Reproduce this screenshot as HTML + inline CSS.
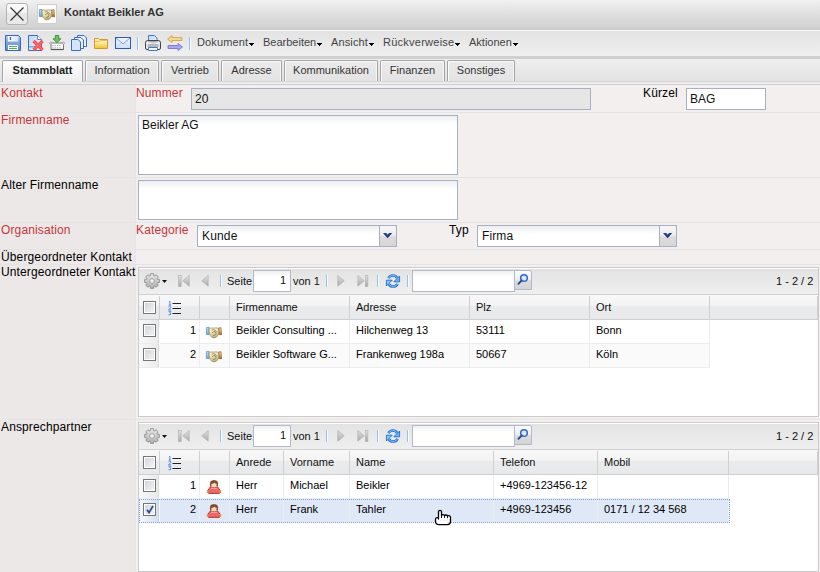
<!DOCTYPE html><html><head><meta charset="utf-8"><style>
*{box-sizing:border-box;margin:0;padding:0}
html,body{width:820px;height:572px;overflow:hidden;background:#f2efee;font-family:"Liberation Sans",sans-serif;font-size:12px;color:#111}
div{position:absolute}
svg{position:absolute;overflow:visible}
#title{left:0;top:0;width:820px;height:30px;background:linear-gradient(#f1f1f1 0px,#d8d8d8 20px,#d4d4d4 27px,#cdcdcd 28px,#cacaca 30px)}
#closebtn{left:6px;top:3px;width:22px;height:22px;border:1px solid #b4b4b4;border-radius:3px;background:linear-gradient(#fbfbfb 0,#f3f3f3 45%,#e6e6e6 46%,#e9e9e9 100%)}
#ticon{left:37px;top:4px;width:20px;height:20px;border:1px solid #cfcfcf;background:#fff}
#ttext{left:64px;top:6px;font-size:11px;font-weight:bold;color:#333;white-space:nowrap}
#tb{left:0;top:30px;width:820px;height:26px;border-top:1px solid #fbfbfb;background:linear-gradient(#e3e3e3,#efefef)}
#tbline{left:0;top:56px;width:820px;height:3px;background:#d0d0d0}
#tabs{left:0;top:59px;width:820px;height:26px;background:linear-gradient(#efefef,#e2e2e2 22px,#d4d4d4 22px,#d4d4d4 23px,#ececec 23px,#ececec 25px,#d0d0d0 25px)}
.tab{top:60px;height:21px;border:1px solid #a4a4a4;border-bottom:none;border-radius:2px 2px 0 0;box-shadow:inset 1px 1px 0 #fbfbfb,inset -1px 0 0 #f6f6f6;background:linear-gradient(#ebebeb,#e3e3e3);font-size:11px;color:#333;text-align:center;line-height:19px;white-space:nowrap}
.tab.sel{height:22px;background:linear-gradient(#ffffff,#ececec);font-weight:bold;color:#222}
#tabline{display:none}
#tabline2{display:none}
#lcol{left:0;top:85px;width:135px;height:487px;background:#ece8e7}
.rowsep{left:0;width:820px;height:1px;background:#e5e4e4}
.lbl{font-size:12px;color:#000;white-space:nowrap;letter-spacing:0.13px}
.red{color:#c8353a}
.inp{border:1px solid #a9afc2;background:#fff;font-size:12px;padding-left:3px;white-space:nowrap}
.ta{background:linear-gradient(#eceeef,#fff 8px)}
.menu{top:36px;font-size:11px;color:#444;white-space:nowrap;position:absolute}
.menu svg{position:relative;display:inline-block;margin-left:1px;vertical-align:baseline;top:0px}
.sep{width:1px;background:#8fc3f5;box-shadow:1px 0 0 #fafafa}
.g{border:1px solid #cbcbcb;background:#fff}
.gtb{height:27px;background:linear-gradient(#e3e3e3,#efefef);border-top:1px solid #fff;border-bottom:1px solid #d0d0d0}
.gh{height:25px;background:linear-gradient(#f8f8f8 0,#f3f3f3 45%,#eaebed 46%,#e8e9eb 100%);border-bottom:1px solid #d0d0d0}
.hc{top:1px;height:23px;border-right:1px solid #d0d0d0;font-size:11px;color:#111;line-height:23px;padding-left:6px;white-space:nowrap}
.cell{height:24px;border-right:1px solid #ededed;border-bottom:1px solid #ededed;font-size:11px;color:#000;line-height:21px;padding-left:6px;white-space:nowrap;overflow:hidden}
.num{text-align:right;padding-right:3px;padding-left:0}
.cbc{background:linear-gradient(90deg,#f9f9f9,#eaeaea);border-right-color:#dadada}
.cb{width:13px;height:13px;border:1px solid #767676;background:linear-gradient(135deg,#cfd3d8,#f6f6f6)}
.cb::after{content:"";position:absolute;left:0;top:0;right:0;bottom:0;border:1px solid #fff}
.tbt{font-size:11px;color:#111;white-space:nowrap}
.pinp{border:1px solid #b5b8c8;background:linear-gradient(#eef0f2,#fff 6px);font-size:11px;text-align:right;padding-right:4px;line-height:19px}
</style></head><body>
<svg width="0" height="0" style="position:absolute"><defs><linearGradient id="hsb" x1="0" y1="0" x2="0" y2="1"><stop offset="0" stop-color="#c4e0f8"/><stop offset="1" stop-color="#70a8e0"/></linearGradient><linearGradient id="hso" x1="0" y1="0" x2="0" y2="1"><stop offset="0" stop-color="#fad8a8"/><stop offset="0.6" stop-color="#e8a860"/><stop offset="1" stop-color="#7a5a20"/></linearGradient><linearGradient id="hsh" x1="0" y1="0" x2="0.3" y2="1"><stop offset="0" stop-color="#fdf8dc"/><stop offset="0.5" stop-color="#ece2b8"/><stop offset="1" stop-color="#c0b080"/></linearGradient><linearGradient id="fold" x1="0" y1="0" x2="0" y2="1"><stop offset="0" stop-color="#fff6c0"/><stop offset="1" stop-color="#f0c830"/></linearGradient><linearGradient id="paper" x1="0" y1="0" x2="1" y2="1"><stop offset="0" stop-color="#bcd6f4"/><stop offset="1" stop-color="#f0f6fc"/></linearGradient><linearGradient id="prn" x1="0" y1="0" x2="1" y2="0"><stop offset="0" stop-color="#d0d0d0"/><stop offset="0.15" stop-color="#ffffff"/><stop offset="0.5" stop-color="#d8d8d8"/><stop offset="0.85" stop-color="#ffffff"/><stop offset="1" stop-color="#c8c8c8"/></linearGradient><linearGradient id="navg" x1="0" y1="0" x2="0" y2="1"><stop offset="0" stop-color="#e4e4e4"/><stop offset="1" stop-color="#a8a8a8"/></linearGradient><linearGradient id="flop" x1="0" y1="0" x2="0" y2="1"><stop offset="0" stop-color="#b8d0f0"/><stop offset="0.5" stop-color="#7aa4e0"/><stop offset="1" stop-color="#5a8ad8"/></linearGradient><linearGradient id="flab" x1="0" y1="0" x2="1" y2="0"><stop offset="0" stop-color="#ffffff"/><stop offset="1" stop-color="#d8e6f8"/></linearGradient><linearGradient id="docg" x1="0" y1="0" x2="1" y2="1"><stop offset="0" stop-color="#bcd4f4"/><stop offset="1" stop-color="#f4f8fe"/></linearGradient><linearGradient id="mailg" x1="0" y1="0" x2="0" y2="1"><stop offset="0" stop-color="#f0f6fe"/><stop offset="1" stop-color="#cfe0f6"/></linearGradient><linearGradient id="gear" x1="0" y1="0" x2="0" y2="1"><stop offset="0" stop-color="#e8e8e8"/><stop offset="1" stop-color="#b0b0b0"/></linearGradient></defs></svg>
<div id="title"></div>
<div id="closebtn"><svg style="left:0;top:0" width="20" height="20"><path d="M3.5 3.5 L16.5 16.5 M16.5 3.5 L3.5 16.5" stroke="#333" stroke-width="1.2"/></svg></div>
<div id="ticon"></div>
<svg style="left:39px;top:9px" width="16" height="12" viewBox="0 0 16 12">
<path d="M0.4 0.6 L3 0.3 L3.2 7.6 L0.4 7.4 Z" fill="url(#hsb)" stroke="#4a78a8" stroke-width="0.6"/>
<path d="M3 1.2 Q5 0.8 7 1.2 Q9 0.6 13 1.2 Q13.6 6 12 8.4 Q10 10.9 8 10.9 Q5.6 10.9 4.2 8.6 Q3 6.5 3 1.2 Z" fill="url(#hsh)" stroke="#948458" stroke-width="0.7"/>
<path d="M5.8 3 Q8 2 9.5 3.5 L11 5.5 M6 6 L8.5 4 L10 6.5 Q9 8.5 7 8.8" fill="none" stroke="#7a6a3a" stroke-width="0.7"/>
<path d="M12.8 1.1 L15 0.6 L15.6 7.8 L13.2 7.6 Z" fill="url(#hso)" stroke="#7a5018" stroke-width="0.6"/>
</svg>
<div id="ttext">Kontakt Beikler AG</div>
<div id="tb"></div><div id="tbline"></div>
<div class="menu" style="left:197px;letter-spacing:0.12px">Dokument<svg width="5" height="3" shape-rendering="crispEdges"><path d="M0 0h5v1h-1v1h-1v1h-1v-1h-1v-1h-1z" fill="#000"/></svg></div>
<div class="menu" style="left:263px;letter-spacing:0px">Bearbeiten<svg width="5" height="3" shape-rendering="crispEdges"><path d="M0 0h5v1h-1v1h-1v1h-1v-1h-1v-1h-1z" fill="#000"/></svg></div>
<div class="menu" style="left:331px;letter-spacing:0.14px">Ansicht<svg width="5" height="3" shape-rendering="crispEdges"><path d="M0 0h5v1h-1v1h-1v1h-1v-1h-1v-1h-1z" fill="#000"/></svg></div>
<div class="menu" style="left:383px;letter-spacing:0.25px">Rückverweise<svg width="5" height="3" shape-rendering="crispEdges"><path d="M0 0h5v1h-1v1h-1v1h-1v-1h-1v-1h-1z" fill="#000"/></svg></div>
<div class="menu" style="left:469px;letter-spacing:0px">Aktionen<svg width="5" height="3" shape-rendering="crispEdges"><path d="M0 0h5v1h-1v1h-1v1h-1v-1h-1v-1h-1z" fill="#000"/></svg></div>
<svg style="left:5px;top:35px" width="16" height="16" viewBox="0 0 16 16">
<path d="M0.5 0.5 H13.5 L15.5 2.5 V15.5 H0.5 Z" fill="url(#flop)" stroke="#3466c4" stroke-width="1"/>
<rect x="3" y="1" width="10" height="5.5" fill="url(#flab)"/>
<rect x="4.8" y="2" width="1.3" height="3" fill="#3466c4"/>
<rect x="3" y="10" width="10" height="5" fill="#ffffff"/>
<path d="M4 11.5H12 M4 13.5H12" stroke="#5cb040" stroke-width="1"/>
</svg>
<svg style="left:28px;top:35px" width="16" height="16" viewBox="0 0 16 16">
<path d="M0.5 0.5 L9.5 0.5 L13.5 4.5 L13.5 15.5 L0.5 15.5 Z" fill="url(#docg)" stroke="#3a6cc0" stroke-width="1"/>
<path d="M9.5 0.5 L9.5 4.5 L13.5 4.5" fill="#ffffff" stroke="#3a6cc0" stroke-width="0.8"/>
<rect x="1" y="11" width="6" height="1.4" fill="#5ab4f4"/>
<path d="M5.6 6 L14.6 15 M14.6 6 L5.6 15" stroke="#f84a4a" stroke-width="3.2"/>
<path d="M6.2 6.6 L14 14.4 M14 6.6 L6.2 14.4" stroke="#ff8c8c" stroke-width="0.9"/>
</svg>
<svg style="left:49px;top:35px" width="16" height="16" viewBox="0 0 16 16">
<path d="M1 8 H15 L14.5 9.5 V14.5 H2 V9.5 Z" fill="#fbfbfb" stroke="#6a6a6a" stroke-width="0.9"/>
<path d="M2 14.5 H14.5" stroke="#555" stroke-width="1.2"/>
<path d="M3.5 10.5h9 M3.5 12.8h9" stroke="#8a8a8a" stroke-width="0.9" stroke-dasharray="1 1.3"/>
<circle cx="1.5" cy="8" r="1" fill="#fff" stroke="#888" stroke-width="0.6"/><circle cx="14.5" cy="8" r="1" fill="#fff" stroke="#888" stroke-width="0.6"/>
<path d="M6.2 0.5 H9.8 V3.8 H12 L8 7.8 L4 3.8 H6.2 Z" fill="#6cc060" stroke="#2f8a2a" stroke-width="0.8"/>
</svg>
<svg style="left:71px;top:35px" width="16" height="16" viewBox="0 0 16 16">
<path d="M6.5 0.5 L13 0.5 L15.5 3 L15.5 11.5 L6.5 11.5 Z" fill="#e8f0fa" stroke="#3a6cc0" stroke-width="1"/>
<path d="M3.5 2.5 L10 2.5 L12.5 5 L12.5 13.5 L3.5 13.5 Z" fill="#e8f0fa" stroke="#3a6cc0" stroke-width="1"/>
<path d="M0.5 4.5 L7 4.5 L9.5 7 L9.5 15.5 L0.5 15.5 Z" fill="#d4e4f8" stroke="#3a6cc0" stroke-width="1"/>
</svg>
<svg style="left:93px;top:35px" width="16" height="16" viewBox="0 0 16 16">
<path d="M1.5 3.5 H5.5 L6.5 4.5 H14.5 V13.5 H1.5 Z" fill="#f8e8a0" stroke="#d8952c" stroke-width="1"/>
<path d="M2 7 H6.5 L7.5 6 H14 V13 H2 Z" fill="url(#fold)"/>
<path d="M2 6.5 H6.3 L7.3 5.5 H14" fill="none" stroke="#e0b050" stroke-width="0.7"/>
<path d="M2.5 5 H5" stroke="#fff8d0" stroke-width="0.9"/>
</svg>
<svg style="left:115px;top:35px" width="17" height="16" viewBox="0 0 17 16">
<rect x="0.5" y="2.5" width="15" height="11" fill="url(#mailg)" stroke="#2a5cb8" stroke-width="1"/>
<path d="M1 3 L8 9 L15 3" fill="none" stroke="#7aa0dc" stroke-width="1"/>
<path d="M1.5 12.5 L6 8.5 M14.5 12.5 L10 8.5" fill="none" stroke="#b8ccec" stroke-width="0.8"/>
</svg>
<svg style="left:145px;top:35px" width="16" height="16" viewBox="0 0 16 16">
<path d="M3.5 0.5 H9.5 L12 3 V8 H3.5 Z" fill="url(#paper)" stroke="#3a7ad0" stroke-width="1"/>
<path d="M0.5 7.5 Q0.8 5.5 2.5 5.5 H13.5 Q15.2 5.5 15.5 7.5 V13 Q15.5 14.5 14 14.5 H2 Q0.5 14.5 0.5 13 Z" fill="url(#prn)" stroke="#333" stroke-width="0.9"/>
<path d="M2.5 6.8 H13.5" stroke="#888" stroke-width="0.8"/>
<rect x="2.5" y="9" width="11" height="3" fill="#b8b8b8"/>
<path d="M3.5 12.5 H12.5 V15.5 H3.5 Z" fill="#f4f8fc" stroke="#3a7ad0" stroke-width="1"/>
</svg>
<svg style="left:167px;top:35px" width="16" height="16" viewBox="0 0 16 16">
<path d="M0.5 4 L5 0.5 L5 2.5 L15 2.5 L15 5.5 L5 5.5 L5 7.5 Z" fill="#f8d880" stroke="#c8a040" stroke-width="0.8"/>
<path d="M15.5 12 L11 8.5 L11 10.5 L1 10.5 L1 13.5 L11 13.5 L11 15.5 Z" fill="#a8a8f0" stroke="#6a6ad0" stroke-width="0.8"/>
</svg>
<div class="sep" style="left:137px;top:37px;height:13px"></div>
<div class="sep" style="left:189px;top:37px;height:13px"></div>
<div id="tabs"></div><div id="tabline"></div><div id="tabline2"></div>
<div class="tab" style="left:85px;width:74px">Information</div>
<div class="tab" style="left:161px;width:58px">Vertrieb</div>
<div class="tab" style="left:221px;width:61px">Adresse</div>
<div class="tab" style="left:284px;width:94px">Kommunikation</div>
<div class="tab" style="left:380px;width:65px">Finanzen</div>
<div class="tab" style="left:447px;width:68px">Sonstiges</div>
<div class="tab sel" style="left:2px;width:81px">Stammblatt</div>
<div id="lcol"></div><div style="left:135px;top:85px;width:1px;height:487px;background:#e6e5e5"></div>
<div class="rowsep" style="top:112px"></div>
<div class="rowsep" style="top:177px"></div>
<div class="rowsep" style="top:222px"></div>
<div class="rowsep" style="top:249px"></div>
<div class="rowsep" style="top:264px"></div>
<div class="rowsep" style="top:419px"></div>
<div class="lbl red" style="left:1px;top:86px">Kontakt</div>
<div class="lbl red" style="left:136px;top:86px">Nummer</div>
<div class="inp" style="left:191px;top:88px;width:400px;height:22px;background:#e6e6e6;line-height:20px">20</div>
<div class="lbl" style="left:643px;top:86px">Kürzel</div>
<div class="inp" style="left:686px;top:88px;width:80px;height:22px;line-height:20px">BAG</div>
<div class="lbl red" style="left:1px;top:113px">Firmenname</div>
<div class="inp ta" style="left:138px;top:115px;width:320px;height:60px;padding-top:2px">Beikler AG</div>
<div class="lbl" style="left:1px;top:178px">Alter Firmenname</div>
<div class="inp ta" style="left:138px;top:180px;width:320px;height:40px"></div>
<div class="lbl red" style="left:1px;top:223px">Organisation</div>
<div class="lbl red" style="left:136px;top:223px">Kategorie</div>
<div class="inp ta" style="left:197px;top:225px;width:200px;height:22px;line-height:20px;padding-left:4px;letter-spacing:0.15px">Kunde</div>
<div style="left:379px;top:225px;width:18px;height:22px;border:1px solid #a9afc2;border-radius:0 2px 0 0;background:linear-gradient(#f6f6f6 0,#eeeeee 45%,#dcdcdc 55%,#d6d6d6 100%)"><svg style="left:3px;top:7px" width="10" height="6" viewBox="0 0 10 6"><path d="M0 0 H3.2 L4.6 1.8 L6 0 H9.2 L4.6 5.2 Z" fill="#1e3a86"/></svg></div>
<div class="lbl" style="left:449px;top:223px">Typ</div>
<div class="inp ta" style="left:477px;top:225px;width:200px;height:22px;line-height:20px;padding-left:4px;letter-spacing:0.1px">Firma</div>
<div style="left:659px;top:225px;width:18px;height:22px;border:1px solid #a9afc2;border-radius:0 2px 0 0;background:linear-gradient(#f6f6f6 0,#eeeeee 45%,#dcdcdc 55%,#d6d6d6 100%)"><svg style="left:3px;top:7px" width="10" height="6" viewBox="0 0 10 6"><path d="M0 0 H3.2 L4.6 1.8 L6 0 H9.2 L4.6 5.2 Z" fill="#1e3a86"/></svg></div>
<div class="lbl" style="left:1px;top:250px">Übergeordneter Kontakt</div>
<div class="lbl" style="left:1px;top:265px">Untergeordneter Kontakt</div>
<div class="lbl" style="left:1px;top:420px">Ansprechpartner</div>
<div class="g" style="left:138px;top:267px;width:681px;height:150px"></div>
<div class="gtb" style="left:139px;top:268px;width:679px"></div>
<svg style="left:144px;top:273px" width="16" height="16" viewBox="0 0 16 16">
<path d="M13.07 6.14 L15.35 6.51 L15.35 9.49 L13.07 9.86 L12.90 10.27 L14.25 12.14 L12.14 14.25 L10.27 12.90 L9.86 13.07 L9.49 15.35 L6.51 15.35 L6.14 13.07 L5.73 12.90 L3.86 14.25 L1.75 12.14 L3.10 10.27 L2.93 9.86 L0.65 9.49 L0.65 6.51 L2.93 6.14 L3.10 5.73 L1.75 3.86 L3.86 1.75 L5.73 3.10 L6.14 2.93 L6.51 0.65 L9.49 0.65 L9.86 2.93 L10.27 3.10 L12.14 1.75 L14.25 3.86 L12.90 5.73 Z" fill="url(#gear)" stroke="#8c8c8c" stroke-width="0.9" stroke-linejoin="round"/>
<circle cx="8" cy="8" r="2.4" fill="#f0f0f0" stroke="#9a9a9a" stroke-width="0.9"/>
</svg>
<svg style="left:162px;top:280px" width="6" height="4"><path d="M0 0h5l-2.5 3z" fill="#111"/></svg>
<svg style="left:178px;top:275px" width="13" height="12" viewBox="0 0 13 12"><rect x="0.6" y="0.5" width="2.6" height="11" fill="url(#navg)" stroke="#b0b0b0" stroke-width="0.6"/><path d="M11.2 0.5 L4.8 5.8 L11.2 11.2 Z" fill="url(#navg)" stroke="#b0b0b0" stroke-width="0.7"/></svg>
<svg style="left:201px;top:275px" width="8" height="12" viewBox="0 0 8 12"><path d="M7.2 0.5 L0.8 5.8 L7.2 11.2 Z" fill="url(#navg)" stroke="#b0b0b0" stroke-width="0.7"/></svg>
<div class="sep" style="left:220px;top:275px;height:12px"></div>
<div class="tbt" style="left:227px;top:275px">Seite</div>
<div class="pinp" style="left:253px;top:270px;width:38px;height:22px">1</div>
<div class="tbt" style="left:293px;top:275px">von 1</div>
<div class="sep" style="left:326px;top:275px;height:12px"></div>
<svg style="left:337px;top:275px" width="8" height="12" viewBox="0 0 8 12"><path d="M0.8 0.5 L7.2 5.8 L0.8 11.2 Z" fill="url(#navg)" stroke="#b0b0b0" stroke-width="0.7"/></svg>
<svg style="left:357px;top:275px" width="13" height="12" viewBox="0 0 13 12"><path d="M0.8 0.5 L7.2 5.8 L0.8 11.2 Z" fill="url(#navg)" stroke="#b0b0b0" stroke-width="0.7"/><rect x="8.3" y="0.5" width="2.6" height="11" fill="url(#navg)" stroke="#b0b0b0" stroke-width="0.6"/></svg>
<div class="sep" style="left:377px;top:275px;height:12px"></div>
<svg style="left:385px;top:273px" width="16" height="16" viewBox="0 0 16 16">
<path d="M3.4 5.2 A5 5 0 0 1 12.2 5" fill="none" stroke="#2474dc" stroke-width="2.6"/>
<path d="M3.4 5.2 A5 5 0 0 1 12.2 5" fill="none" stroke="#8ccaf8" stroke-width="0.9"/>
<path d="M14.6 3 L14.6 8.8 L8.8 8.8 Z" fill="#6ab6f4" stroke="#1e6ad0" stroke-width="0.9" stroke-linejoin="round"/>
<path d="M12.6 10.8 A5 5 0 0 1 3.8 11" fill="none" stroke="#2474dc" stroke-width="2.6"/>
<path d="M12.6 10.8 A5 5 0 0 1 3.8 11" fill="none" stroke="#8ccaf8" stroke-width="0.9"/>
<path d="M1.4 7.2 L7.2 7.2 L1.4 13 Z" fill="#8ccaf8" stroke="#1e6ad0" stroke-width="0.9" stroke-linejoin="round"/>
</svg>
<div class="sep" style="left:407px;top:275px;height:12px"></div>
<div class="pinp" style="left:412px;top:270px;width:103px;height:22px"></div>
<div style="left:514px;top:270px;width:18px;height:20px;border:1px solid #b4b8cc;border-radius:0 2px 0 0;background:linear-gradient(#fafafa,#f0f0f0 45%,#dcdcdc 55%,#d4d4d4)"><svg style="left:0;top:0" width="16" height="18" viewBox="0 0 16 18"><circle cx="9" cy="7" r="3.3" fill="#dfe6f0" stroke="#2a6acb" stroke-width="1.5"/><path d="M6.8 9.4 L3.4 12.8" stroke="#1e4a98" stroke-width="1.9" stroke-linecap="round"/></svg></div>
<div class="tbt" style="left:776px;top:275px">1 - 2 / 2</div>
<div class="gh" style="left:139px;top:295px;width:679px">
<div class="hc" style="left:0px;width:21px"></div>
<div class="hc" style="left:21px;width:40px"></div>
<div class="hc" style="left:61px;width:30px"></div>
<div class="hc" style="left:91px;width:120px">Firmenname</div>
<div class="hc" style="left:211px;width:120px">Adresse</div>
<div class="hc" style="left:331px;width:120px">Plz</div>
<div class="hc" style="left:451px;width:120px">Ort</div>
<div class="hc" style="left:571px;width:108px"></div>
</div>
<div class="cb" style="left:143px;top:301px"></div>
<svg style="left:167px;top:300px" width="15" height="16" viewBox="0 0 15 16">
<path d="M1.9 2 L2.9 1.3 V5.2 M1.7 5.1 H4.1" fill="none" stroke="#4f8ae0" stroke-width="1"/>
<path d="M1.5 6.9 Q2.6 5.9 3.6 6.7 Q4 7.4 3.1 8.2 L1.5 9.9 H4.1" fill="none" stroke="#4f8ae0" stroke-width="1"/>
<path d="M1.5 11.3 H3.9 L2.7 12.7 Q4.1 12.9 4 14 Q3.5 15.2 1.5 14.8" fill="none" stroke="#4f8ae0" stroke-width="1"/>
<path d="M5.5 3.5H14 M5.5 8.5H14 M5.5 13.5H14" stroke="#222" stroke-width="1.2"/></svg>
<div class="cell cbc" style="left:139px;top:320px;width:20px;"></div>
<div class="cell num" style="left:160px;top:320px;width:40px;">1</div>
<div class="cell" style="left:200px;top:320px;width:30px;"></div>
<div class="cell" style="left:230px;top:320px;width:120px;">Beikler Consulting ...</div>
<div class="cell" style="left:350px;top:320px;width:120px;">Hilchenweg 13</div>
<div class="cell" style="left:470px;top:320px;width:120px;">53111</div>
<div class="cell" style="left:590px;top:320px;width:120px;">Bonn</div>
<div class="cb" style="left:143px;top:324px"></div>
<svg style="left:206px;top:327px" width="16" height="12" viewBox="0 0 16 12">
<path d="M0.4 0.6 L3 0.3 L3.2 7.6 L0.4 7.4 Z" fill="url(#hsb)" stroke="#4a78a8" stroke-width="0.6"/>
<path d="M3 1.2 Q5 0.8 7 1.2 Q9 0.6 13 1.2 Q13.6 6 12 8.4 Q10 10.9 8 10.9 Q5.6 10.9 4.2 8.6 Q3 6.5 3 1.2 Z" fill="url(#hsh)" stroke="#948458" stroke-width="0.7"/>
<path d="M5.8 3 Q8 2 9.5 3.5 L11 5.5 M6 6 L8.5 4 L10 6.5 Q9 8.5 7 8.8" fill="none" stroke="#7a6a3a" stroke-width="0.7"/>
<path d="M12.8 1.1 L15 0.6 L15.6 7.8 L13.2 7.6 Z" fill="url(#hso)" stroke="#7a5018" stroke-width="0.6"/>
</svg>
<div class="cell cbc" style="left:139px;top:344px;width:20px;"></div>
<div class="cell num" style="left:160px;top:344px;width:40px;background:#fafafa;">2</div>
<div class="cell" style="left:200px;top:344px;width:30px;background:#fafafa;"></div>
<div class="cell" style="left:230px;top:344px;width:120px;background:#fafafa;">Beikler Software G...</div>
<div class="cell" style="left:350px;top:344px;width:120px;background:#fafafa;">Frankenweg 198a</div>
<div class="cell" style="left:470px;top:344px;width:120px;background:#fafafa;">50667</div>
<div class="cell" style="left:590px;top:344px;width:120px;background:#fafafa;">Köln</div>
<div class="cb" style="left:143px;top:348px"></div>
<svg style="left:206px;top:351px" width="16" height="12" viewBox="0 0 16 12">
<path d="M0.4 0.6 L3 0.3 L3.2 7.6 L0.4 7.4 Z" fill="url(#hsb)" stroke="#4a78a8" stroke-width="0.6"/>
<path d="M3 1.2 Q5 0.8 7 1.2 Q9 0.6 13 1.2 Q13.6 6 12 8.4 Q10 10.9 8 10.9 Q5.6 10.9 4.2 8.6 Q3 6.5 3 1.2 Z" fill="url(#hsh)" stroke="#948458" stroke-width="0.7"/>
<path d="M5.8 3 Q8 2 9.5 3.5 L11 5.5 M6 6 L8.5 4 L10 6.5 Q9 8.5 7 8.8" fill="none" stroke="#7a6a3a" stroke-width="0.7"/>
<path d="M12.8 1.1 L15 0.6 L15.6 7.8 L13.2 7.6 Z" fill="url(#hso)" stroke="#7a5018" stroke-width="0.6"/>
</svg>
<div class="g" style="left:138px;top:422px;width:681px;height:150px"></div>
<div class="gtb" style="left:139px;top:423px;width:679px"></div>
<svg style="left:144px;top:428px" width="16" height="16" viewBox="0 0 16 16">
<path d="M13.07 6.14 L15.35 6.51 L15.35 9.49 L13.07 9.86 L12.90 10.27 L14.25 12.14 L12.14 14.25 L10.27 12.90 L9.86 13.07 L9.49 15.35 L6.51 15.35 L6.14 13.07 L5.73 12.90 L3.86 14.25 L1.75 12.14 L3.10 10.27 L2.93 9.86 L0.65 9.49 L0.65 6.51 L2.93 6.14 L3.10 5.73 L1.75 3.86 L3.86 1.75 L5.73 3.10 L6.14 2.93 L6.51 0.65 L9.49 0.65 L9.86 2.93 L10.27 3.10 L12.14 1.75 L14.25 3.86 L12.90 5.73 Z" fill="url(#gear)" stroke="#8c8c8c" stroke-width="0.9" stroke-linejoin="round"/>
<circle cx="8" cy="8" r="2.4" fill="#f0f0f0" stroke="#9a9a9a" stroke-width="0.9"/>
</svg>
<svg style="left:162px;top:435px" width="6" height="4"><path d="M0 0h5l-2.5 3z" fill="#111"/></svg>
<svg style="left:178px;top:430px" width="13" height="12" viewBox="0 0 13 12"><rect x="0.6" y="0.5" width="2.6" height="11" fill="url(#navg)" stroke="#b0b0b0" stroke-width="0.6"/><path d="M11.2 0.5 L4.8 5.8 L11.2 11.2 Z" fill="url(#navg)" stroke="#b0b0b0" stroke-width="0.7"/></svg>
<svg style="left:201px;top:430px" width="8" height="12" viewBox="0 0 8 12"><path d="M7.2 0.5 L0.8 5.8 L7.2 11.2 Z" fill="url(#navg)" stroke="#b0b0b0" stroke-width="0.7"/></svg>
<div class="sep" style="left:220px;top:430px;height:12px"></div>
<div class="tbt" style="left:227px;top:430px">Seite</div>
<div class="pinp" style="left:253px;top:425px;width:38px;height:22px">1</div>
<div class="tbt" style="left:293px;top:430px">von 1</div>
<div class="sep" style="left:326px;top:430px;height:12px"></div>
<svg style="left:337px;top:430px" width="8" height="12" viewBox="0 0 8 12"><path d="M0.8 0.5 L7.2 5.8 L0.8 11.2 Z" fill="url(#navg)" stroke="#b0b0b0" stroke-width="0.7"/></svg>
<svg style="left:357px;top:430px" width="13" height="12" viewBox="0 0 13 12"><path d="M0.8 0.5 L7.2 5.8 L0.8 11.2 Z" fill="url(#navg)" stroke="#b0b0b0" stroke-width="0.7"/><rect x="8.3" y="0.5" width="2.6" height="11" fill="url(#navg)" stroke="#b0b0b0" stroke-width="0.6"/></svg>
<div class="sep" style="left:377px;top:430px;height:12px"></div>
<svg style="left:385px;top:428px" width="16" height="16" viewBox="0 0 16 16">
<path d="M3.4 5.2 A5 5 0 0 1 12.2 5" fill="none" stroke="#2474dc" stroke-width="2.6"/>
<path d="M3.4 5.2 A5 5 0 0 1 12.2 5" fill="none" stroke="#8ccaf8" stroke-width="0.9"/>
<path d="M14.6 3 L14.6 8.8 L8.8 8.8 Z" fill="#6ab6f4" stroke="#1e6ad0" stroke-width="0.9" stroke-linejoin="round"/>
<path d="M12.6 10.8 A5 5 0 0 1 3.8 11" fill="none" stroke="#2474dc" stroke-width="2.6"/>
<path d="M12.6 10.8 A5 5 0 0 1 3.8 11" fill="none" stroke="#8ccaf8" stroke-width="0.9"/>
<path d="M1.4 7.2 L7.2 7.2 L1.4 13 Z" fill="#8ccaf8" stroke="#1e6ad0" stroke-width="0.9" stroke-linejoin="round"/>
</svg>
<div class="sep" style="left:407px;top:430px;height:12px"></div>
<div class="pinp" style="left:412px;top:425px;width:103px;height:22px"></div>
<div style="left:514px;top:425px;width:18px;height:20px;border:1px solid #b4b8cc;border-radius:0 2px 0 0;background:linear-gradient(#fafafa,#f0f0f0 45%,#dcdcdc 55%,#d4d4d4)"><svg style="left:0;top:0" width="16" height="18" viewBox="0 0 16 18"><circle cx="9" cy="7" r="3.3" fill="#dfe6f0" stroke="#2a6acb" stroke-width="1.5"/><path d="M6.8 9.4 L3.4 12.8" stroke="#1e4a98" stroke-width="1.9" stroke-linecap="round"/></svg></div>
<div class="tbt" style="left:776px;top:430px">1 - 2 / 2</div>
<div class="gh" style="left:139px;top:450px;width:679px">
<div class="hc" style="left:0px;width:21px"></div>
<div class="hc" style="left:21px;width:40px"></div>
<div class="hc" style="left:61px;width:30px"></div>
<div class="hc" style="left:91px;width:54px">Anrede</div>
<div class="hc" style="left:145px;width:66px">Vorname</div>
<div class="hc" style="left:211px;width:144px">Name</div>
<div class="hc" style="left:355px;width:104px">Telefon</div>
<div class="hc" style="left:459px;width:131px">Mobil</div>
<div class="hc" style="left:590px;width:89px"></div>
</div>
<div class="cb" style="left:143px;top:456px"></div>
<svg style="left:167px;top:455px" width="15" height="16" viewBox="0 0 15 16">
<path d="M1.9 2 L2.9 1.3 V5.2 M1.7 5.1 H4.1" fill="none" stroke="#4f8ae0" stroke-width="1"/>
<path d="M1.5 6.9 Q2.6 5.9 3.6 6.7 Q4 7.4 3.1 8.2 L1.5 9.9 H4.1" fill="none" stroke="#4f8ae0" stroke-width="1"/>
<path d="M1.5 11.3 H3.9 L2.7 12.7 Q4.1 12.9 4 14 Q3.5 15.2 1.5 14.8" fill="none" stroke="#4f8ae0" stroke-width="1"/>
<path d="M5.5 3.5H14 M5.5 8.5H14 M5.5 13.5H14" stroke="#222" stroke-width="1.2"/></svg>
<div class="cell cbc" style="left:139px;top:475px;width:20px;"></div>
<div class="cell num" style="left:160px;top:475px;width:40px;">1</div>
<div class="cell" style="left:200px;top:475px;width:30px;"></div>
<div class="cell" style="left:230px;top:475px;width:54px;">Herr</div>
<div class="cell" style="left:284px;top:475px;width:66px;">Michael</div>
<div class="cell" style="left:350px;top:475px;width:144px;">Beikler</div>
<div class="cell" style="left:494px;top:475px;width:104px;">+4969-123456-12</div>
<div class="cell" style="left:598px;top:475px;width:131px;"></div>
<div class="cb" style="left:143px;top:479px"></div>
<svg style="left:206px;top:478px" width="16" height="16" viewBox="0 0 16 16">
<path d="M1.6 12.5 L4.2 9.2 Q5 8.6 6 8.6 H10 Q11 8.6 11.8 9.2 L14.4 12.5 L13.4 15.4 H2.6 Z" fill="#f06464" stroke="#b82838" stroke-width="0.9"/>
<path d="M4.8 10.8 Q8 9.8 11.2 10.8" stroke="#f9a4a4" stroke-width="1" fill="none"/>
<rect x="0.8" y="12.2" width="1.8" height="2.8" fill="#e89a38"/>
<rect x="13.4" y="12.2" width="1.8" height="2.8" fill="#e89a38"/>
<rect x="5" y="4.4" width="6" height="4.6" rx="1" fill="#f8dcbc"/>
<path d="M4.4 8.2 V4.6 Q4.6 2.4 8 2.4 Q11.4 2.4 11.6 4.6 V8.2 H10.9 V5.6 Q9.4 5.6 8.6 4.6 Q7.2 5.6 5.1 5.4 V8.2 Z" fill="#8c4a1c" stroke="#5a2c0c" stroke-width="0.5"/>
</svg>
<div class="cell cbc" style="left:139px;top:499px;width:20px;background:linear-gradient(90deg,#f6f9fd,#d4e0f4);border-right-color:#c4d4ee;"></div>
<div class="cell num" style="left:160px;top:499px;width:40px;background:#dfe8f6;">2</div>
<div class="cell" style="left:200px;top:499px;width:30px;background:#dfe8f6;"></div>
<div class="cell" style="left:230px;top:499px;width:54px;background:#dfe8f6;">Herr</div>
<div class="cell" style="left:284px;top:499px;width:66px;background:#dfe8f6;">Frank</div>
<div class="cell" style="left:350px;top:499px;width:144px;background:#dfe8f6;">Tahler</div>
<div class="cell" style="left:494px;top:499px;width:104px;background:#dfe8f6;">+4969-123456</div>
<div class="cell" style="left:598px;top:499px;width:131px;background:#dfe8f6;">0171 / 12 34 568</div>
<div style="left:139px;top:499px;width:591px;height:24px;border:1px dotted #7f9fdc"></div>
<div class="cb" style="left:143px;top:503px"></div>
<svg style="left:145px;top:504px" width="10" height="10" viewBox="0 0 10 10"><path d="M2 5.8 L4 8.6 L8 2" fill="none" stroke="#2a4a9a" stroke-width="1.7"/></svg>
<svg style="left:206px;top:502px" width="16" height="16" viewBox="0 0 16 16">
<path d="M1.6 12.5 L4.2 9.2 Q5 8.6 6 8.6 H10 Q11 8.6 11.8 9.2 L14.4 12.5 L13.4 15.4 H2.6 Z" fill="#f06464" stroke="#b82838" stroke-width="0.9"/>
<path d="M4.8 10.8 Q8 9.8 11.2 10.8" stroke="#f9a4a4" stroke-width="1" fill="none"/>
<rect x="0.8" y="12.2" width="1.8" height="2.8" fill="#e89a38"/>
<rect x="13.4" y="12.2" width="1.8" height="2.8" fill="#e89a38"/>
<rect x="5" y="4.4" width="6" height="4.6" rx="1" fill="#f8dcbc"/>
<path d="M4.4 8.2 V4.6 Q4.6 2.4 8 2.4 Q11.4 2.4 11.6 4.6 V8.2 H10.9 V5.6 Q9.4 5.6 8.6 4.6 Q7.2 5.6 5.1 5.4 V8.2 Z" fill="#8c4a1c" stroke="#5a2c0c" stroke-width="0.5"/>
</svg>
<svg style="left:435px;top:510px" width="17" height="16" viewBox="0 0 17 16"><path d="M3.5 8.5 L3.5 1.6 Q3.5 0.4 5 0.4 Q6.5 0.4 6.5 1.6 L6.5 5.6 Q6.6 4.6 8 4.6 Q9.4 4.6 9.5 5.8 Q9.6 5 11 5 Q12.4 5 12.5 6.3 Q12.7 5.6 13.8 5.7 Q15.5 5.9 15.5 7.4 L15.5 11.6 Q15.5 14.6 12.5 14.6 L4 14.6 Q0.5 14.6 0.5 11.2 L0.5 9.6 Q0.5 7.6 2 7.6 Q3.5 7.6 3.5 9 Z" fill="#fff" stroke="#000" stroke-width="1.3" stroke-linejoin="round"/><path d="M6.5 5.6 V8 M9.5 5.8 V8 M12.5 6.3 V8.2" stroke="#000" stroke-width="0.9"/><path d="M5.6 10.6 l0.9 -0.9 M8.6 10.6 l0.9 -0.9 M11.6 10.6 l0.9 -0.9 M12.6 13 l1.6 -1.6" stroke="#b0b0b0" stroke-width="0.7"/></svg>
</body></html>
